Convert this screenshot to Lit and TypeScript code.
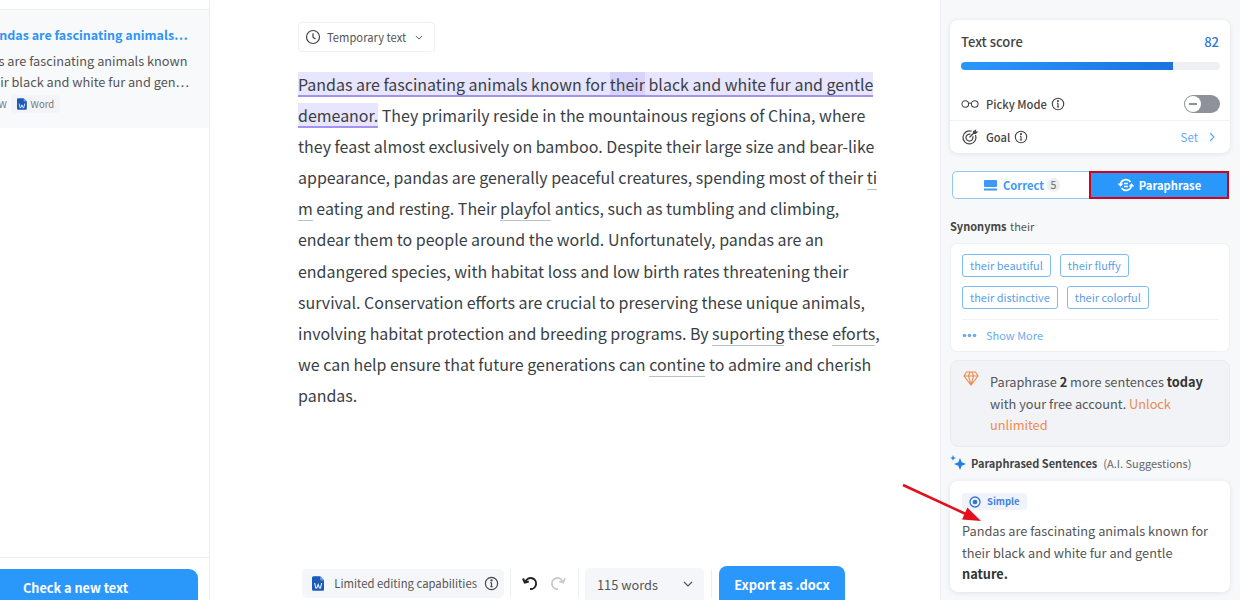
import { LitElement, html, css, svg } from "lit";
import { customElement } from "lit/decorators.js";

const info = (s = 14) => html`<svg class="inf" width=${s} height=${s} viewBox="0 0 14 14" fill="none" stroke="#444" stroke-width="1.1"><circle cx="7" cy="7" r="5.7"/><path d="M7 6.2v3.8M5.9 10h2.2M5.9 6.2H7"/><circle cx="7" cy="4.1" r=".5" fill="#444"/></svg>`;
const word = (s = 14) => html`<svg width=${s * 0.82} height=${s} viewBox="0 0 12 14"><path d="M1.5 0H8l4 4v8.5a1.5 1.5 0 0 1-1.5 1.5h-9A1.5 1.5 0 0 1 0 12.500V1.500A1.500 1.500 0 0 1 1.500 0z" fill="#1b5ab8"/><path d="M8 0l4 4H9a1 1 0 0 1-1-1z" fill="#6d9be0"/><path d="M2.600 6.500l1.100 5h1l1.300-3.500 1.300 3.500h1l1.100-5" fill="none" stroke="#fff" stroke-width="1"/></svg>`;
const chev = svg`<path d="M1 1l4 4 4-4" fill="none" stroke="#555" stroke-width="1.200"/>`;

@customElement("app-root")
export class AppRoot extends LitElement {
  static styles = css`
    :host { display: block; width: 1240px; height: 600px; overflow: hidden; background: #fff; font-family: "Noto Sans CJK SC", "Noto Sans", sans-serif; color: #333; }
    * { box-sizing: border-box; }
    .page { position: relative; display: grid; grid-template-columns: 210px 730px 300px; height: 600px; overflow: hidden; white-space: nowrap; }
    .left { display: flex; flex-direction: column; border-right: 1px solid #eceef1; overflow: hidden; }
    .doc { margin-top: 9px; height: 119px; background: #f8f9fb; border-top: 1px solid #eceef1; padding: 14px 0 0 0; overflow: hidden; }
    .doc-title { font-size: 12.500px; line-height: 22px; font-weight: 700; color: #2f94f5; margin-left: -16px; }
    .doc-text { font-size: 12.750px; line-height: 21px; color: #555; margin: 4px 0 0 -39px; }
    .doc-meta { display: flex; align-items: center; margin: 3px 0 0 -9px; font-size: 9.500px; color: #777; height: 18px; }
    .wtag { display: flex; gap: 4px; align-items: center; background: #f3f4f8; padding: 0 6px; height: 18px; border-radius: 4px; margin-left: 4px; }
    .grow { flex: 1; }
    .left-foot { border-top: 1px solid #eceef1; padding: 11px 11px 0 0; height: 43px; }
    .check { display: flex; height: 40px; background: #2a98fb; border-radius: 0 9px 0 0; color: #fff; font-weight: 700; font-size: 12.700px; align-items: center; padding: 0 0 4px 23px; width: 198px; }
    .main { display: flex; flex-direction: column; padding: 22px 0 0 88px; overflow: hidden; }
    .temp { display: flex; width: 137px; height: 30px; align-items: center; gap: 6px; border: 1px solid #eef0f3; border-radius: 4px; padding: 0 6px; font-size: 11.200px; color: #555; }
    .txt { margin-top: 17px; font-size: 15.970px; line-height: 31.100px; color: #3a3f46; }
    .ln { display: block; height: 31.100px; }
    .hl { background: #e8e5fe; box-shadow: inset 0 -2px 0 #a193ee; padding: 0 0 1px; }
    .hl.d { background: #d8d3fb; }
    .u { border-bottom: 1px solid #b9c3c0; }
    .bar { margin-top: auto; display: flex; align-items: center; height: 34px; margin-left: 4px; }
    .lim { display: flex; align-items: center; height: 29px; width: 202px; background: #f5f6f9; border-radius: 5px; padding: 0 0 0 10px; gap: 10px; font-size: 11.300px; color: #555; }
    .lim .inf { margin-left: -3px; }
    .sep { width: 1px; height: 28px; background: #eceef1; }
    .undo { display: flex; width: 61px; gap: 12px; padding-left: 5px; align-items: center; margin-left: 6px; }
    .wc { display: flex; align-items: center; justify-content: space-between; width: 119px; height: 32px; margin: 2px 7px 0 6px; background: #f5f6f9; border-radius: 5px 5px 0 0; padding: 0 11px 0 12px; font-size: 12.800px; color: #555; }
    .exp { width: 126px; height: 34px; margin-left: 7px; background: #2a98fb; color: #fff; font-weight: 700; font-size: 12.800px; border-radius: 8px 8px 0 0; display: flex; align-items: center; justify-content: center; padding-top: 2px; }
    .right { background: #f7f8fa; border-left: 1px solid #eceef1; padding: 20px 10px 0 9px; overflow: hidden; }
    .card { background: #fff; border-radius: 8px; box-shadow: 0 1px 5px rgba(30,40,70,.1); }
    .score { height: 133px; padding: 0 0; }
    .sh { display: flex; justify-content: space-between; padding: 13px 11px 0 11px; font-size: 13px; line-height: 18px; font-weight: 500; color: #444; }
    .sh b { color: #2e74d8; font-weight: 500; font-size: 13px; }
    .track { height: 8px; margin: 11px 10px 0 11px; background: #eef0f4; border-radius: 4px; overflow: hidden; }
    .fill { height: 8px; background: linear-gradient(90deg,#2a98fb,#1a74dd); }
    .row { display: flex; align-items: center; padding: 0 10px 0 11px; font-size: 11.200px; font-weight: 500; color: #444; gap: 4px; }
    .row svg.ic { width: 18px; margin-right: 3px; }
    .picky { height: 34px; margin-top: 17px; border-bottom: 1px solid #f1f2f4; }
    .goal { height: 32px; }
    .toggle { margin-left: auto; width: 36px; height: 18px; border-radius: 9px; background: #8e9199; position: relative; }
    .toggle i { position: absolute; left: 1px; top: 1px; width: 16px; height: 16px; border-radius: 50%; background: #fff; }
    .toggle i::after { content: ""; position: absolute; left: 4px; top: 7px; width: 8px; height: 2px; background: #8e9199; }
    .set { margin-left: auto; color: #62aaf0; font-weight: 400; font-size: 11.500px; display: flex; gap: 11px; align-items: center; margin-right: 5px; }
    .tabs { display: flex; height: 28px; margin: 18px 1px 0 2px; position: relative; }
    .tab { flex: 1; display: flex; align-items: center; justify-content: center; font-size: 11.200px; font-weight: 700; gap: 6px; }
    .c { border: 1px solid #8fc7f7; border-right: 0; border-radius: 5px 0 0 5px; background: #fff; color: #3d99f5; width: 137px; flex: none; padding-left: 2px; }
    .n { display: inline-block; background: #eceef1; color: #666; font-weight: 400; font-size: 10.500px; width: 13px; height: 14px; line-height: 14px; border-radius: 50%; text-align: center; margin-left: -3px; }
    .p { background: #2a98fb; color: #fff; border: 2px solid #d6001c; gap: 4px; }
    .syn { margin-top: 18px; font-size: 11px; line-height: 18px; color: #555; }
    .syn b { font-weight: 700; color: #444; margin-right: 1px; }
    .scard { margin-top: 8px; height: 109px; background: #fff; border: 1px solid #eff0f3; border-radius: 7px; padding: 10px 10px 0 11px; }
    .chips { display: flex; flex-wrap: wrap; gap: 9px; height: 66px; border-bottom: 1px solid #f1f2f4; align-content: flex-start; }
    .chip { height: 23px; line-height: 20px; padding: 0 7px; border: 1px solid #7dbcf3; border-radius: 3px; font-size: 11px; color: #5c9fe6; }
    .more { display: flex; align-items: center; gap: 9px; height: 30px; font-size: 11px; color: #6aaced; }
    .promo { margin-top: 8px; height: 87px; background: #f1f3f7; border: 1px solid #e9ebef; border-radius: 8px; display: flex; gap: 11px; padding: 10px 0 0 12px; font-size: 12.750px; line-height: 21.500px; color: #555; }
    .promo b { font-weight: 700; color: #333; }
    .promo em { font-style: normal; color: #ee8b4e; }
    .ph { display: flex; align-items: center; margin-top: 7px; height: 18px; font-size: 11px; color: #666; gap: 4px; }
    .ph b { font-weight: 700; color: #444; margin-right: 2px; }
    .res { margin-top: 9px; height: 111px; padding: 12px 11px 0 12px; font-size: 12.750px; line-height: 21.500px; color: #555; }
    .res b { font-weight: 700; color: #333; }
    .simple { display: flex; align-items: center; gap: 6px; height: 17px; width: 65px; background: #f0f3fb; border-radius: 3px; padding-left: 7px; font-size: 9.500px; font-weight: 700; color: #3f83e0; margin-bottom: 10px; }
    .arrow { position: absolute; left: 900px; top: 482px; }
  `;

  render() {
    return html`<div class="page">
      <aside class="left">
        <div class="doc">
          <div class="doc-title">Pandas are fascinating animals…</div>
          <div class="doc-text">Pandas are fascinating animals known<br />for their black and white fur and gen…</div>
          <div class="doc-meta">1 W <span class="wtag">${word(12)}Word</span></div>
        </div>
        <div class="grow"></div>
        <div class="left-foot"><div class="check">Check a new text</div></div>
      </aside>

      <main class="main">
        <div class="temp">
          <svg width="16" height="16" viewBox="0 0 16 16" fill="none" stroke="#444" stroke-width="1.200"><circle cx="8" cy="8" r="6.500"/><path d="M8 4.200V8.300L10.500 10"/></svg>
          <span>Temporary text</span>
          <svg width="8" height="5" viewBox="0 0 10 6" style="margin-left:3px">${chev}</svg>
        </div>
        <div class="txt">
          <span class="ln"><span class="hl">Pandas are fascinating animals known for </span><span class="hl d">their</span><span class="hl"> black and white fur and gentle</span></span>
          <span class="ln"><span class="hl">demeanor.</span> They primarily reside in the mountainous regions of China, where</span>
          <span class="ln">they feast almost exclusively on bamboo. Despite their large size and bear-like</span>
          <span class="ln">appearance, pandas are generally peaceful creatures, spending most of their <span class="u">ti</span></span>
          <span class="ln"><span class="u">m</span> eating and resting. Their <span class="u">playfol</span> antics, such as tumbling and climbing,</span>
          <span class="ln">endear them to people around the world. Unfortunately, pandas are an</span>
          <span class="ln">endangered species, with habitat loss and low birth rates threatening their</span>
          <span class="ln">survival. Conservation efforts are crucial to preserving these unique animals,</span>
          <span class="ln">involving habitat protection and breeding programs. By <span class="u">suporting</span> these <span class="u">eforts</span>,</span>
          <span class="ln">we can help ensure that future generations can <span class="u">contine</span> to admire and cherish</span>
          <span class="ln">pandas.</span>
        </div>
        <div class="bar">
          <div class="lim">${word(15)}<span>Limited editing capabilities</span>${info(15)}</div>
          <span class="sep" style="margin-left:6px"></span>
          <div class="undo">
            <svg width="16" height="15" viewBox="0 0 16 15" fill="none" stroke="#222" stroke-width="2"><path d="M3.500 5.500A5.500 5.500 0 1 1 8 13"/><path d="M1 2.500l1.800 4 4-1" /></svg>
            <svg width="16" height="15" viewBox="0 0 16 15" fill="none" stroke="#c5c8cc" stroke-width="1.800"><path d="M12.500 5.500A5.500 5.500 0 1 0 8 13"/><path d="M15 2.500l-1.800 4-4-1"/></svg>
          </div>
          <span class="sep"></span>
          <div class="wc"><span>115 words</span><svg width="10" height="6" viewBox="0 0 10 6">${chev}</svg></div>
          <span class="sep"></span>
          <div class="exp">Export as .docx</div>
        </div>
      </main>

      <aside class="right">
        <div class="card score">
          <div class="sh"><span>Text score</span><b>82</b></div>
          <div class="track"><div class="fill" style="width:82%"></div></div>
          <div class="row picky">
            <svg class="ic" height="10" viewBox="0 0 19 10" fill="none" stroke="#444" stroke-width="1.100"><circle cx="4.500" cy="5" r="3.500"/><circle cx="14.500" cy="5" r="3.500"/><path d="M8 4.500q1.500-1 3 0"/></svg>
            <span>Picky Mode</span>${info(14)}
            <span class="toggle"><i></i></span>
          </div>
          <div class="row goal">
            <svg class="ic" height="16" viewBox="0 0 16 16" fill="none" stroke="#444" stroke-width="1.200"><path d="M13.500 6a6.500 6.500 0 1 1-3.800-3.700"/><path d="M10.700 7.200a3.500 3.500 0 1 1-2.200-2"/><path d="M7.500 8.200L13 3M11.500 2.500V4.500h2l1.500-1.500h-1.500V1.500z"/></svg>
            <span>Goal</span>${info(14)}
            <span class="set">Set <svg width="6" height="10" viewBox="0 0 6 10" fill="none" stroke="#62aaf0" stroke-width="1.200"><path d="M1 1l4 4-4 4"/></svg></span>
          </div>
        </div>

        <div class="tabs">
          <div class="tab c">
            <svg width="13" height="11" viewBox="0 0 13 11" fill="#3d99f5"><rect x="0" y="0" width="13" height="7" rx="1"/><rect x="0" y="8.500" width="13" height="2"/></svg>
            <span>Correct</span><span class="n">5</span>
          </div>
          <div class="tab p">
            <svg width="18" height="14" viewBox="0 0 17 14" fill="none" stroke="#fff" stroke-width="1.600"><path d="M3 7a5.500 5.500 0 0 1 10-3M14 7a5.500 5.500 0 0 1-10 3"/><path d="M1 5.500l2 2 2-2M12 8.500l2-2 2 2"/><path d="M6.500 5.500h4M6.500 8.500h4"/></svg>
            <span>Paraphrase</span>
          </div>
        </div>

        <div class="syn"><b>Synonyms</b> their</div>
        <div class="scard">
          <div class="chips">
            <span class="chip">their beautiful</span><span class="chip">their fluffy</span>
            <span class="chip">their distinctive</span><span class="chip">their colorful</span>
          </div>
          <div class="more">
            <svg width="15" height="5" viewBox="0 0 15 5" fill="#6aaced"><circle cx="2.500" cy="2.500" r="1.800"/><circle cx="7.500" cy="2.500" r="1.800"/><circle cx="12.500" cy="2.500" r="1.800"/></svg>
            Show More
          </div>
        </div>

        <div class="promo">
          <svg width="16" height="15" viewBox="0 0 16 15" fill="none" stroke="#ee8b4e" stroke-width="1.100" style="flex:none"><path d="M3.500 1h9L15 5l-7 9-7-9zM1 5h14M5.500 5L8 14l2.500-9M5.500 5L7 1M10.500 5L9 1"/></svg>
          <div>Paraphrase <b>2</b> more sentences <b>today</b><br />with your free account. <em>Unlock</em><br /><em>unlimited</em></div>
        </div>

        <div class="ph">
          <svg width="17" height="17" viewBox="0 0 17 17" fill="#1f7fe8"><path d="M10 3l1.700 4.300L16 9l-4.300 1.700L10 15l-1.700-4.300L4 9l4.300-1.700z"/><path d="M3 0l.8 2.200L6 3l-2.200.8L3 6l-.8-2.200L0 3l2.200-.8z"/></svg>
          <b>Paraphrased Sentences</b> (A.I. Suggestions)
        </div>

        <div class="card res">
          <div class="simple">
            <svg width="12" height="12" viewBox="0 0 12 12" fill="none" stroke="#2f74d8" stroke-width="1.300"><circle cx="6" cy="6" r="5"/><circle cx="6" cy="6" r="1.700" fill="#2f74d8"/></svg>
            Simple
          </div>
          <div>Pandas are fascinating animals known for<br />their black and white fur and gentle<br /><b>nature.</b></div>
        </div>
      </aside>

      <svg class="arrow" width="85" height="45" viewBox="0 0 85 45"><path d="M3 3L68 33" stroke="#e0101c" stroke-width="2.500"/><path d="M81 39L62 37.400L67.400 25.600z" fill="#e0101c"/></svg>
    </div>`;
  }
}
